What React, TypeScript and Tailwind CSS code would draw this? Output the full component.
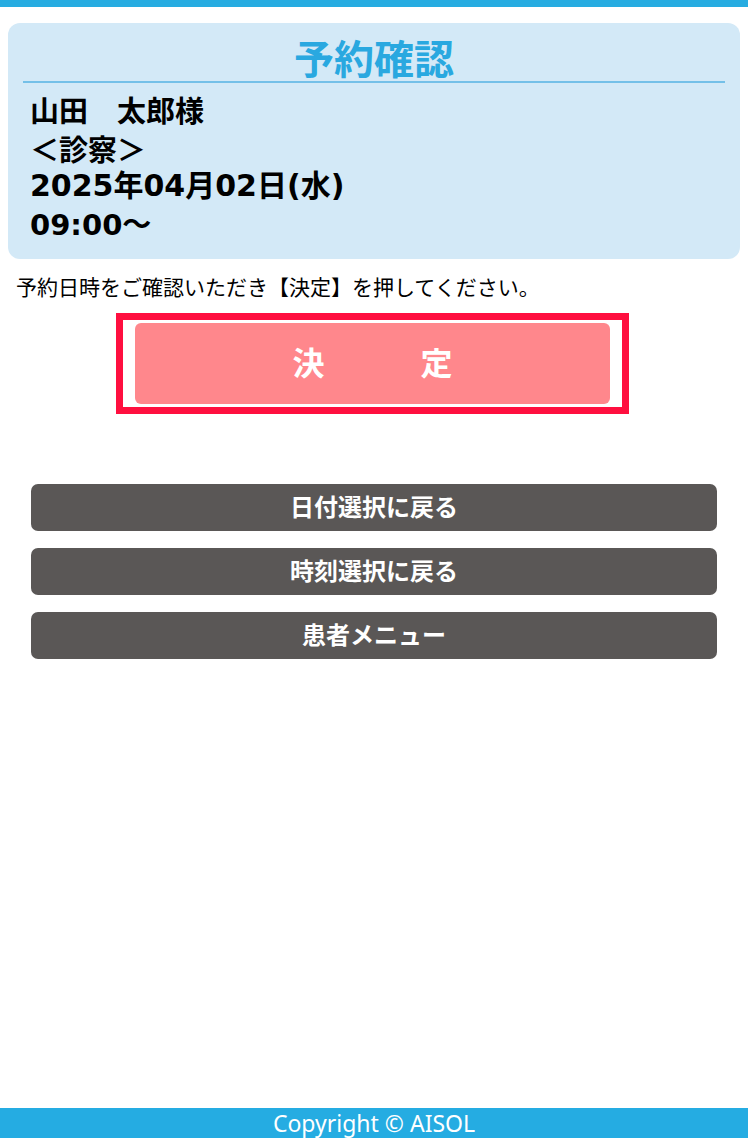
import React from "react";

const jp = { fontFamily: '"Noto Sans CJK JP", sans-serif' };
const mixed = { fontFamily: '"DejaVu Sans", "Noto Sans CJK JP", sans-serif' };

const App = () => {
  const backButtons = ["日付選択に戻る", "時刻選択に戻る", "患者メニュー"];

  return (
    <div className="flex min-h-screen flex-col bg-white" style={jp}>
      <div className="h-[7px] bg-[#27ace1]" />
      <main className="flex-1">
        <div className="mx-[8px] mt-[16px] rounded-[12px] bg-[#d3e9f7] px-[15px] pt-[11px] pb-[15px]">
          <h1 className="border-b-2 border-[#74c0e8] pb-[1px] text-center text-[40px] leading-[46px] font-bold text-[#29a8e0]">
            予約確認
          </h1>
          <div
            className="px-[7px] pt-[7px] text-[29px] leading-[38.5px] font-bold text-black"
            style={mixed}
          >
            <div style={jp}>山田　太郎様</div>
            <div style={jp}>＜診察＞</div>
            <div className="text-[30px]">2025年04月02日(水)</div>
            <div>09:00～</div>
          </div>
        </div>

        <p className="mt-[12px] pl-[16px] text-[21px] leading-[30px] text-black">
          予約日時をご確認いただき【決定】を押してください。
        </p>

        <div className="mt-[12px] ml-[116px] w-[513px] border-[7px] border-[#ff0f3f] px-[12px] py-[3px]">
          <button className="flex h-[81px] w-full items-center justify-center rounded-[6px] bg-[#ff878c] pb-[5px] text-[32px] font-bold text-white">
            決　　　定
          </button>
        </div>

        <div className="mt-[70px] flex flex-col gap-[17px] px-[31px]">
          {backButtons.map((label) => (
            <button
              key={label}
              className="h-[47px] w-full rounded-[7px] bg-[#5a5756] pb-[3px] text-[24px] font-bold text-white"
            >
              {label}
            </button>
          ))}
        </div>
      </main>
      <footer
        className="h-[30px] bg-[#25ace2] text-center text-[23px] leading-[30px] text-white"
        style={{ fontFamily: '"Noto Sans", sans-serif' }}
      >
        Copyright © AISOL
      </footer>
    </div>
  );
};

export default App;
